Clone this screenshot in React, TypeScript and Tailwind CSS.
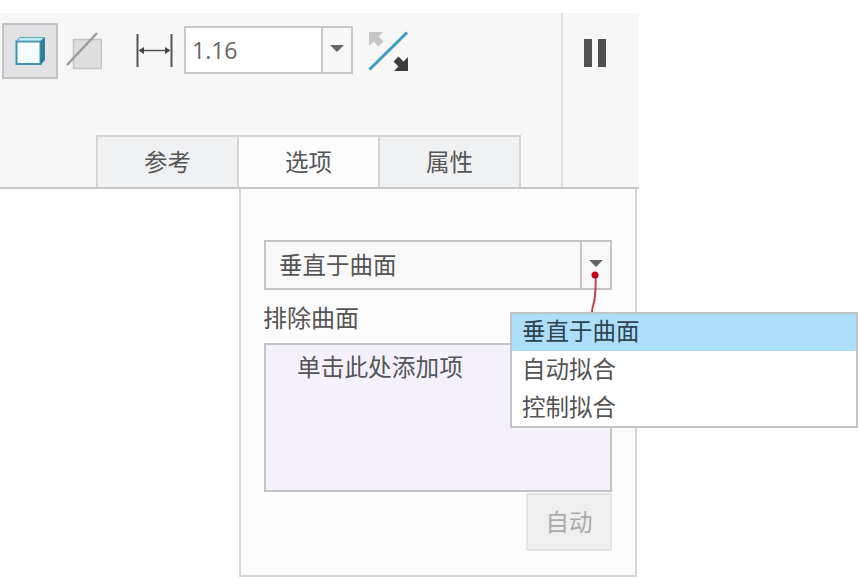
const cjk = { fontFamily: '"Noto Sans CJK SC", "Liberation Sans", sans-serif' };

function SolidIcon() {
  return (
    <svg width="32" height="30" viewBox="0 0 32 30">
      <path d="M2 5 L5 1.5 H31 V24 L27 29 H2 Z" fill="#8cc4d4" />
      <path d="M2.5 5.5 H26.5 V28 H2.5 Z" fill="#f4fcff" stroke="#3f93ad" strokeWidth="2" />
      <path d="M3 5 L6 1.5 H30.5 L26.5 5 Z" fill="#bfe9f4" stroke="#5ea9bf" strokeWidth="1" />
      <path d="M26.5 5 L31 1.5 V24 L26.5 28.5 Z" fill="#2f7f99" />
    </svg>
  );
}

function SurfaceIcon() {
  return (
    <svg width="36" height="38" viewBox="0 0 36 38">
      <rect x="7.5" y="7.5" width="28" height="29" fill="#dfdfdf" stroke="#c4c4c4" strokeWidth="1.5" />
      <path d="M1 33 L31 1" stroke="#9a9a9a" strokeWidth="2.5" fill="none" />
    </svg>
  );
}

function ThicknessIcon() {
  return (
    <svg width="37" height="33" viewBox="0 0 37 33">
      <path d="M1.5 0 V33 M35.5 0 V33" stroke="#555" strokeWidth="2" />
      <path d="M4 16.5 H33" stroke="#555" strokeWidth="1.5" />
      <path d="M2.5 16.5 L8 13 V20 Z M34.5 16.5 L29 13 V20 Z" fill="#444" />
    </svg>
  );
}

function FlipIcon() {
  return (
    <svg width="42" height="42" viewBox="0 0 42 42">
      <path d="M1.5 38.5 L39 1.5" stroke="#3e9cc0" strokeWidth="3" fill="none" />
      <path d="M1 1 H15 L10.5 5.5 L15.5 10.5 L10.5 15.5 L5.5 10.5 L1 15 Z" fill="#c6c6c6" />
      <path d="M40 40 H26 L30.5 35.5 L25.5 30.5 L30.5 25.5 L35.5 30.5 L40 26 Z" fill="#3c3c3c" />
    </svg>
  );
}

function Caret() {
  return <div className="mb-[3px] h-0 w-0 border-x-[7px] border-t-[7px] border-x-transparent border-t-[#666]" />;
}

function Tab({ label, active }: { label: string; active?: boolean }) {
  return (
    <div
      className={`flex h-[52px] w-[141px] items-center justify-center border-t-2 border-r-2 border-[#d4d4d4] text-[23.5px] text-[#555] ${
        active ? "bg-[#fcfcfc]" : "bg-[#f0f1f3]"
      }`}
    >
      {label}
    </div>
  );
}

export default function App() {
  return (
    <div className="relative h-[578px] w-[859px] overflow-hidden bg-white pt-[13px]" style={cjk}>
      {/* ribbon */}
      <div className="flex h-[176px] w-[639px] border-b-2 border-[#c8c8c8] bg-[#f7f7f8]">
        <div className="flex w-[561px] flex-col justify-between">
          <div className="flex items-start pt-[10px] pl-[2px]">
            <div className="flex h-[56px] w-[56px] items-center justify-center border-2 border-[#c2c2c4] bg-[#e2e2e4]">
              <SolidIcon />
            </div>
            <div className="mt-[9px] ml-[8px]">
              <SurfaceIcon />
            </div>
            <div className="mt-[11px] ml-[34px]">
              <ThicknessIcon />
            </div>
            <div className="mt-[3px] ml-[11px] flex h-[48px] w-[169px] border-2 border-[#c8c8c8] bg-white">
              <div
                className="flex flex-1 items-center pl-[6px] text-[23px] text-[#666]"
                style={{ fontFamily: '"Open Sans", sans-serif' }}
              >
                1.16
              </div>
              <div className="flex w-[30px] items-center justify-center border-l-2 border-[#c8c8c8] bg-[#f7f7f8]">
                <Caret />
              </div>
            </div>
            <div className="mt-[8px] ml-[15px]">
              <FlipIcon />
            </div>
          </div>
          <div className="flex pl-[96px]">
            <div className="border-l-2 border-[#d4d4d4]" />
            <Tab label="参考" />
            <Tab label="选项" active />
            <Tab label="属性" />
          </div>
        </div>
        <div className="flex flex-1 justify-center border-l-2 border-[#e2e2e2] pt-[26px] pr-[12px]">
          <div className="flex h-[28px] gap-[6px]">
            <div className="w-[8px] bg-[#505050]" />
            <div className="w-[8px] bg-[#505050]" />
          </div>
        </div>
      </div>

      {/* options panel */}
      <div className="ml-[239px] h-[388px] w-[398px] border-x-2 border-b-2 border-[#d6d6d6] bg-[#fcfcfc] pt-[51px] pl-[23px]">
        <div className="flex h-[50px] w-[348px] border-2 border-[#c4c4c4] bg-[#f8f8f8]">
          <div className="flex flex-1 items-center pl-[13px] text-[23.5px] text-[#555]">垂直于曲面</div>
          <div className="flex w-[30px] items-center justify-center border-l-2 border-[#c4c4c4]">
            <Caret />
          </div>
        </div>
        <div className="mt-[10px] -ml-[1px] h-[43px] text-[24px] leading-[34px] text-[#555]">排除曲面</div>
        <div className="h-[149px] w-[348px] border-2 border-[#c4c4c4] bg-[#f4f1fd] pt-[4px] pl-[31px] text-[23.7px] leading-[34px] text-[#555]">
          单击此处添加项
        </div>
        <div className="mt-[1px] ml-[262px] flex h-[58px] w-[86px] items-center justify-center border-2 border-[#e4e4e4] bg-[#efefef] text-[23.5px] text-[#aaa]">
          自动
        </div>
      </div>

      {/* leader from the arrow to the open list */}
      <svg className="absolute top-[268px] left-[586px]" width="16" height="46" viewBox="0 0 16 46">
        <path d="M9 6 C11 16 9 22 9 28 C9 34 6 38 6 44" stroke="#c2414f" strokeWidth="2" fill="none" />
        <circle cx="9" cy="7" r="3.5" fill="#c00018" />
      </svg>

      {/* open list */}
      <div className="absolute top-[312px] left-[510px] w-[348px] border-2 border-[#c4c4c4] bg-white text-[23.5px] text-[#555]">
        <div className="flex h-[37px] items-center bg-[#addffb] pb-[3px] pl-[10px] text-[#2d4452]">垂直于曲面</div>
        <div className="flex h-[38px] items-center pb-[3px] pl-[10px]">自动拟合</div>
        <div className="flex h-[37px] items-center pb-[2px] pl-[10px]">控制拟合</div>
      </div>
    </div>
  );
}
